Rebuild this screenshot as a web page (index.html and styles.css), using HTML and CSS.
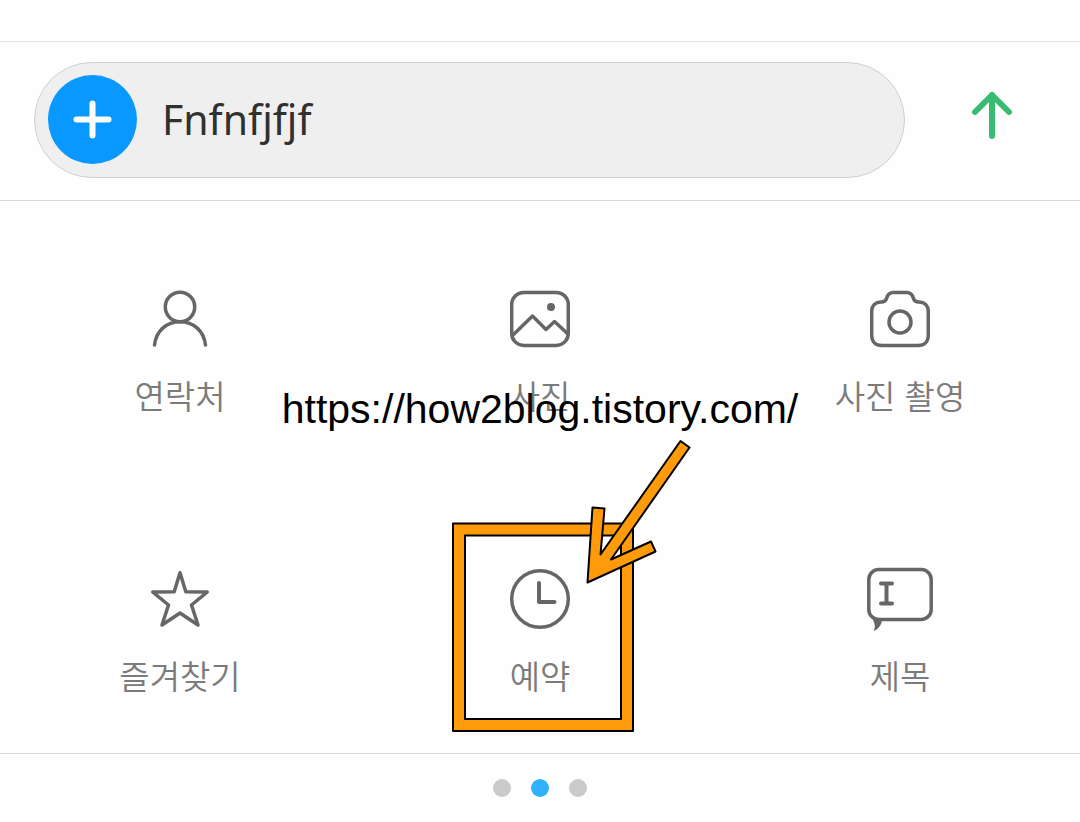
FILE: index.html
```html
<!DOCTYPE html>
<html lang="ko">
  <head>
    <meta charset="utf-8" />
    <meta name="viewport" content="width=device-width, initial-scale=1" />
    <title>메시지</title>
    <link rel="stylesheet" href="styles.css">
  </head>
  <body>
    <form class="compose">
      <div class="message-box">
        <button type="button" class="add" aria-label="추가">
          <svg width="39" height="39" viewBox="0 0 39 39">
            <path d="M19.5 3.5v32M3.5 19.5h32" />
          </svg>
        </button>
        <input type="text" class="message" aria-label="메시지" value="Fnfnfjfjf" />
      </div>
      <button type="button" class="send" aria-label="보내기">
        <svg width="48" height="56" viewBox="0 0 48 56">
          <path d="M23 49V8M6 25L23 8l17 17" />
        </svg>
      </button>
    </form>

    <main class="actions">
      <button type="button" class="action">
        <svg class="icon" viewBox="0 0 72 72">
          <circle cx="36" cy="24" r="14.7" />
          <path d="M10.5 62C12 48 22.5 38.7 36 38.7S60 48 61.5 62" />
        </svg>
        <span>연락처</span>
      </button>
      <button type="button" class="action">
        <svg class="icon" viewBox="0 0 72 72">
          <rect x="7.7" y="9.4" width="56.6" height="53" rx="12" />
          <path d="M9 52l19.5-19L42 46.5l8.5-8L64 51" />
          <circle class="solid" cx="47" cy="24" r="4" />
        </svg>
        <span>사진</span>
      </button>
      <button type="button" class="action">
        <svg class="icon" viewBox="0 0 72 72">
          <path d="M7.7 28.5c0-6 4-9.5 9.5-9.5 3.5 0 4.8-1.5 5.5-4 1-3.6 3-5.6 6.5-5.6h13.6c3.5 0 5.5 2 6.5 5.6.7 2.5 2 4 5.5 4 5.5 0 9.5 3.5 9.5 9.5v24c0 6-4 9.9-10 9.9H17.7c-6 0-10-3.9-10-9.9z" />
          <circle cx="36" cy="39" r="11" />
        </svg>
        <span>사진 촬영</span>
      </button>
      <button type="button" class="action">
        <svg class="icon" viewBox="0 0 72 72">
          <path d="M36 9.7l-5.8 19-21.5.3L24.5 42 18 62l18-12 18 12-6.5-20L63.3 29l-21.5-.3z" />
        </svg>
        <span>즐겨찾기</span>
      </button>
      <button type="button" class="action">
        <svg class="icon" viewBox="0 0 72 72">
          <circle cx="36" cy="36" r="28.3" />
          <path class="bold" d="M35 20v19h15.5" />
        </svg>
        <span>예약</span>
        <svg class="marker" width="250" height="300" viewBox="0 0 250 300">
          <path d="M3 87.5h180V295H3zM15 99.500h156V283H15z" />
          <path d="M230.5 5l9 6.500-78.500 112 40-18 4.500 10-68 31 5-75 12 1-4 46z" />
        </svg>
      </button>
      <button type="button" class="action">
        <svg class="icon" viewBox="0 0 72 72">
          <rect x="4.8" y="6.6" width="62.4" height="49.8" rx="10" />
          <path class="bold" d="M17 20.5h11M17 40.5h11M22.5 20.5v20" />
          <path class="solid" d="M8 55l10 2c-.5 5-3.500 9-8.500 11 2-3 2-7-1.500-13z" />
        </svg>
        <span>제목</span>
      </button>
      <p class="watermark">https://how2blog.tistory.com/</p>
    </main>

    <nav class="pager">
      <button type="button" class="dot" aria-label="1"></button>
      <button type="button" class="dot active" aria-label="2"></button>
      <button type="button" class="dot" aria-label="3"></button>
    </nav>
  </body>
</html>
```
FILE: styles.css
```css
* {
  box-sizing: border-box;
}

body {
  margin: 0;
  padding-top: 41px;
  background-color: #fefefe;
  font-family: "Noto Sans", "Noto Sans CJK KR", sans-serif;
}

button {
  padding: 0;
  border: 0;
  background: none;
  font: inherit;
  color: inherit;
  cursor: pointer;
}

svg {
  fill: none;
  stroke-linecap: round;
  stroke-linejoin: round;
}

/* message bar */
.compose {
  display: flex;
  align-items: center;
  padding: 20px 0 22px 34px;
  border-top: 1px solid #e2e2e2;
  border-bottom: 1px solid #d8d8d8;
}

.message-box {
  flex: 1;
  display: flex;
  align-items: center;
  height: 116px;
  padding: 0 40px 2px 13px;
  background-color: #efefef;
  border: 1px solid #cfcfcf;
  border-radius: 58px;
}

.add {
  display: flex;
  flex: none;
  align-items: center;
  justify-content: center;
  width: 89px;
  height: 89px;
  border-radius: 50%;
  background-color: #0998ff;
}

.add svg {
  stroke: #fff;
  stroke-width: 6;
}

.message {
  flex: 1;
  min-width: 0;
  margin-left: 25px;
  padding: 0;
  border: 0;
  outline: 0;
  background: none;
  font-family: "Noto Sans", sans-serif;
  font-size: 41px;
  color: #303030;
}

.send {
  width: 175px;
  height: 116px;
}

.send svg {
  display: block;
  margin: 0 auto 10px;
  stroke: #37bc71;
  stroke-width: 6;
}

/* attachment menu */
.actions {
  position: relative;
  display: grid;
  grid-template-columns: repeat(3, 1fr);
  row-gap: 144px;
  padding: 82px 0 54px;
  border-bottom: 1px solid #d8d8d8;
}

.action {
  position: relative;
  display: flex;
  flex-direction: column;
  align-items: center;
  gap: 16px;
  font-family: "Noto Sans CJK KR", sans-serif;
  font-size: 33px;
  font-weight: 350;
  line-height: 48px;
  color: #7b7b7b;
}

.icon {
  width: 72px;
  height: 72px;
  stroke: #666;
  stroke-width: 3.5;
}

.icon .solid {
  fill: #666;
  stroke: none;
}

.icon .bold {
  stroke-width: 4;
}

/* highlight around the reserve button */
.marker {
  position: absolute;
  top: -127px;
  left: 50%;
  margin-left: -90px;
  fill: #ff9a0a;
  fill-rule: evenodd;
  stroke: #000;
  stroke-width: 2;
  pointer-events: none;
}

.watermark {
  position: absolute;
  top: 184px;
  left: 0;
  right: 0;
  margin: 0;
  font-family: "Liberation Sans", Arial, sans-serif;
  font-size: 41px;
  line-height: 48px;
  text-align: center;
  color: #000;
  pointer-events: none;
}

/* page dots */
.pager {
  display: flex;
  justify-content: center;
  gap: 20px;
  padding: 25px 0;
}

.dot {
  width: 18px;
  height: 18px;
  border-radius: 50%;
  background-color: #cacaca;
}

.dot.active {
  background-color: #30b1ff;
}
```
